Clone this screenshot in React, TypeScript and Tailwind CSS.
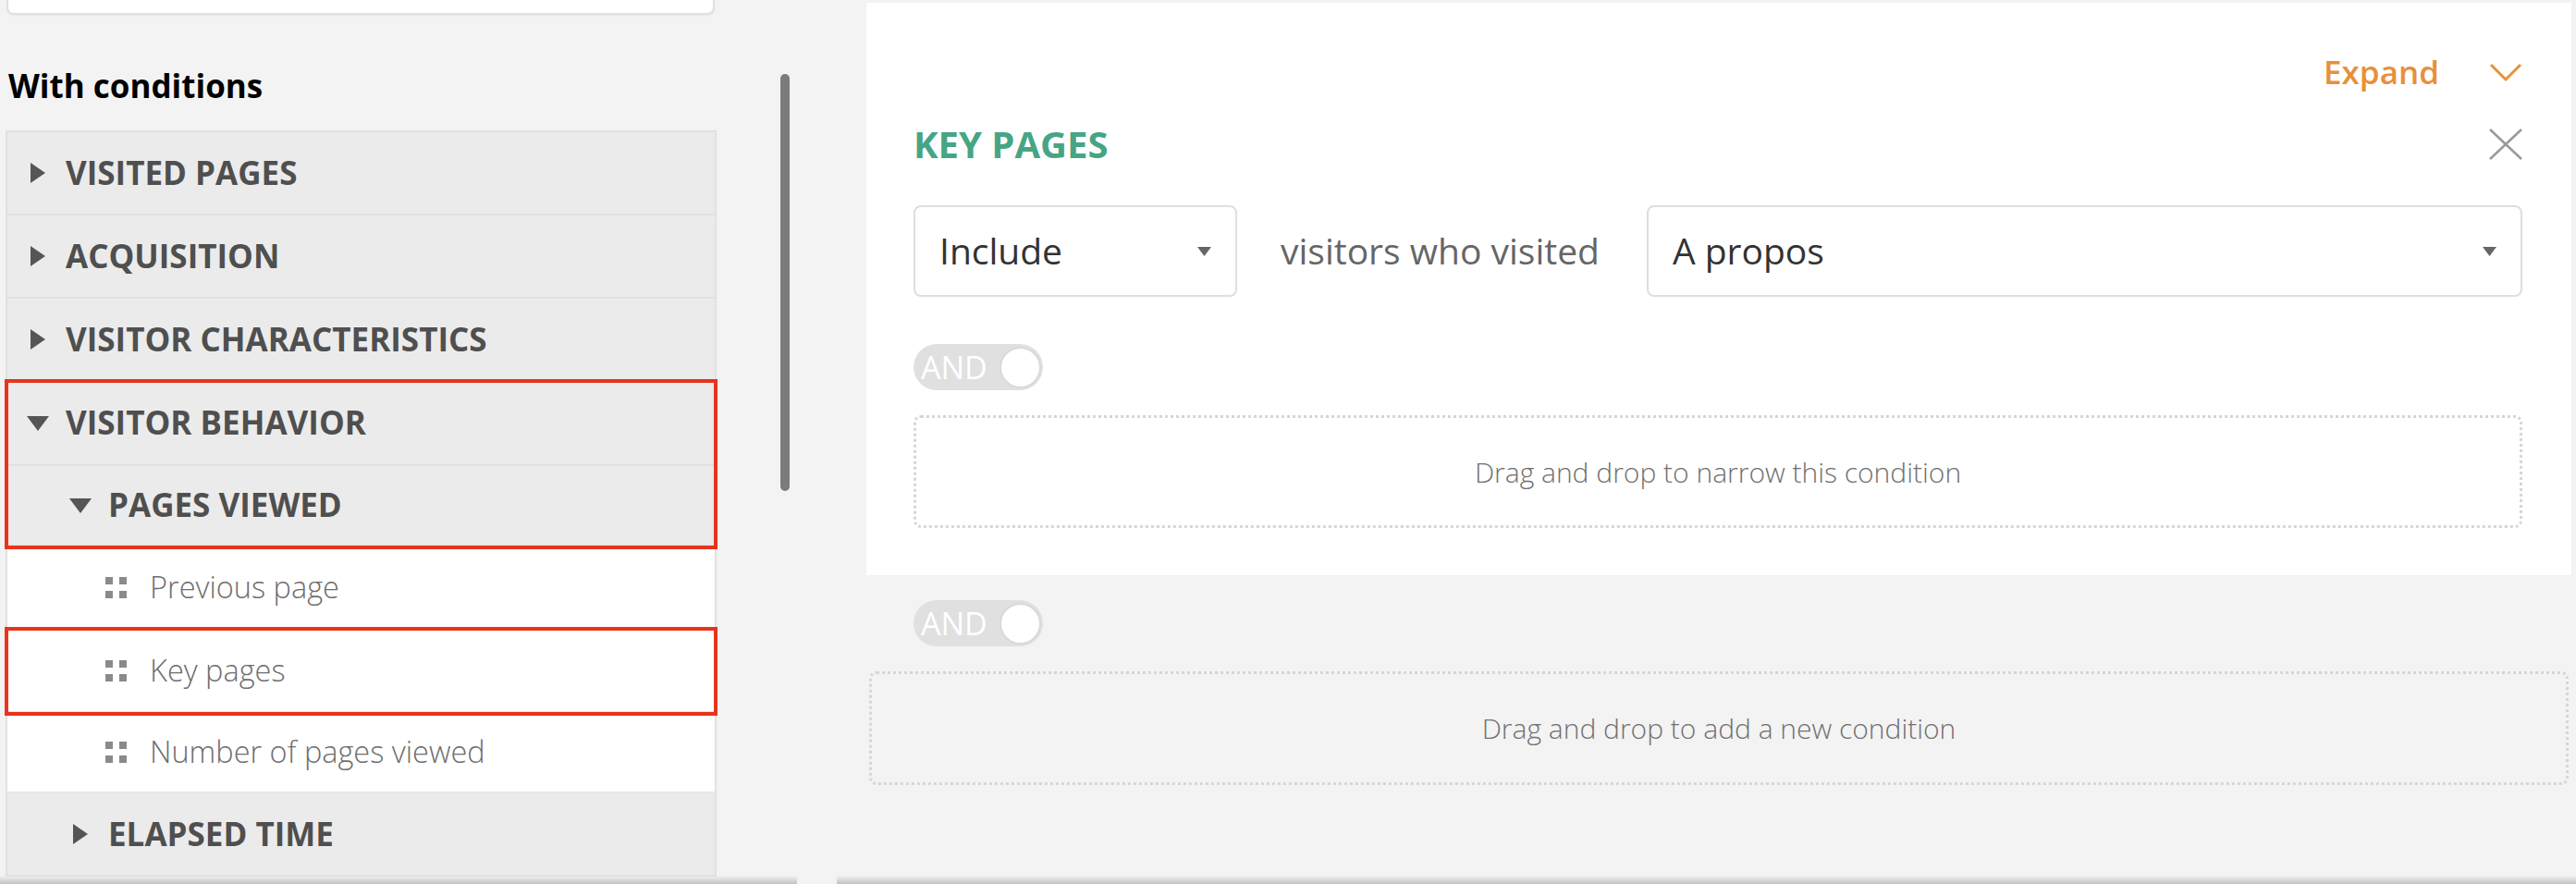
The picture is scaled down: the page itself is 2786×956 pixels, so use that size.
import React from "react";

const RightTri = () => (
  <svg width="18" height="22" viewBox="0 0 18 22" className="shrink-0">
    <polygon points="1,0 17,11 1,22" fill="#555555" />
  </svg>
);
const DownTri = () => (
  <svg width="24" height="18" viewBox="0 0 24 18" className="shrink-0">
    <polygon points="0,1 24,1 12,17" fill="#555555" />
  </svg>
);
const Grip = () => (
  <svg width="23" height="23" viewBox="0 0 23 23" className="shrink-0">
    <rect x="0" y="0" width="8" height="8" fill="#8a8a8a" />
    <rect x="15" y="0" width="8" height="8" fill="#8a8a8a" />
    <rect x="0" y="15" width="8" height="8" fill="#8a8a8a" />
    <rect x="15" y="15" width="8" height="8" fill="#8a8a8a" />
  </svg>
);
const SelTri = () => (
  <svg width="15" height="10" viewBox="0 0 15 10" className="shrink-0">
    <polygon points="0,0 15,0 7.5,10" fill="#666666" />
  </svg>
);

function Cat({ label, open, sub, h }: { label: string; open?: boolean; sub?: boolean; h: string }) {
  return (
    <div className={`flex items-center bg-[#ebebeb] border-b-2 border-[#e1e1e1] ${h} ${sub ? "pl-[67px]" : "pl-[21px]"}`}>
      <div className="w-[24px] flex justify-center">{open ? <DownTri /> : <RightTri />}</div>
      <span className="ml-[18px] text-[35px] font-bold text-[#4f4f4f]">{label}</span>
    </div>
  );
}

function Leaf({ label, h }: { label: string; h: string }) {
  return (
    <div className={`flex items-center bg-white border-b-2 border-[#e8e8e8] ${h} pl-[106px]`}>
      <Grip />
      <span className="ml-[25px] text-[32.5px] font-light text-[#6e6e6e]">{label}</span>
    </div>
  );
}

function Toggle() {
  return (
    <div className="w-[140px] h-[50px] rounded-full bg-[#e0e0e0] flex items-center justify-between pl-[8px] pr-[2px]">
      <span className="text-[34px] leading-none text-white">AND</span>
      <div className="w-[45px] h-[45px] rounded-full bg-white border-2 border-[#d9d9d9]" />
    </div>
  );
}

export default function App() {
  return (
    <div className="relative w-[2786px] h-[956px] overflow-hidden bg-[#f3f3f3] flex font-['Open_Sans',sans-serif]">
      {/* Left column */}
      <div className="w-[937px] shrink-0 flex">
        <div className="ml-[6px] w-[769px] flex flex-col">
          <div className="ml-[1px] w-[766px] h-[16px] bg-white border-2 border-t-0 border-[#e0e0e0] rounded-b-[8px] shadow-[0_1px_2px_rgba(0,0,0,0.06)]" />
          <div className="mt-[53px] pl-[3px] h-[48px] leading-[48px] text-[35px] font-bold text-black">With conditions</div>
          <div className="mt-[24px] border-x-2 border-t-2 border-[#e1e1e1] flex flex-col">
            <Cat label="VISITED PAGES" h="h-[90px]" />
            <Cat label="ACQUISITION" h="h-[90px]" />
            <Cat label="VISITOR CHARACTERISTICS" h="h-[90px]" />
            <div className="relative z-10 outline-4 outline-[#e8341c] outline-offset-[-1px] flex flex-col">
              <Cat label="VISITOR BEHAVIOR" open h="h-[91px]" />
              <Cat label="PAGES VIEWED" open sub h="h-[87px]" />
            </div>
            <Leaf label="Previous page" h="h-[90px]" />
            <div className="relative z-10 outline-4 outline-[#e8341c] outline-offset-[-1px]">
              <Leaf label="Key pages" h="h-[90px]" />
            </div>
            <Leaf label="Number of pages viewed" h="h-[87px]" />
            <Cat label="ELAPSED TIME" sub h="h-[90px]" />
          </div>
        </div>
        <div className="ml-[69px] mt-[80px] w-[10px] h-[451px] rounded-full bg-[#7b7b7b]" />
      </div>

      {/* Right column */}
      <div className="flex-1 pt-[3px] pr-[5px] flex flex-col">
        <div className="bg-white pt-[55px] pb-[51px] pl-[51px] pr-[53px] flex flex-col">
          <div className="h-[40px] flex items-center justify-end">
            <span className="text-[35px] leading-[40px] font-semibold text-[#e8903a]">Expand</span>
            <svg width="36" height="22" viewBox="0 0 36 22" className="ml-[54px]">
              <polyline points="2,3 18,19 34,3" fill="none" stroke="#e8903a" strokeWidth="3" />
            </svg>
          </div>
          <div className="mt-[31px] h-[54px] flex items-center justify-between">
            <span className="text-[40px] leading-[54px] font-bold text-[#46a585]">KEY PAGES</span>
            <svg width="36" height="34" viewBox="0 0 36 34">
              <line x1="1" y1="1" x2="35" y2="33" stroke="#9a9a9a" strokeWidth="2.5" />
              <line x1="35" y1="1" x2="1" y2="33" stroke="#9a9a9a" strokeWidth="2.5" />
            </svg>
          </div>
          <div className="mt-[39px] flex items-center">
            <div className="w-[350px] h-[99px] rounded-[8px] border-2 border-[#dedede] flex items-center justify-between pl-[26px] pr-[26px]">
              <span className="text-[39px] text-[#333333]">Include</span>
              <SelTri />
            </div>
            <span className="ml-[47px] mr-[51px] text-[39px] text-[#666666]">visitors who visited</span>
            <div className="flex-1 h-[99px] rounded-[8px] border-2 border-[#dedede] flex items-center justify-between pl-[26px] pr-[26px]">
              <span className="text-[39px] text-[#333333]">A propos</span>
              <SelTri />
            </div>
          </div>
          <div className="mt-[51px]">
            <Toggle />
          </div>
          <div className="mt-[27px] h-[122px] rounded-[8px] border-[3px] border-dotted border-[#d6d6d6] flex items-center justify-center">
            <span className="text-[30px] font-light text-[#707070]">Drag and drop to narrow this condition</span>
          </div>
        </div>
        <div className="mt-[27px] ml-[51px]">
          <Toggle />
        </div>
        <div className="mt-[27px] mx-[3px] h-[123px] rounded-[8px] border-[3px] border-dotted border-[#d6d6d6] flex items-center justify-center">
          <span className="text-[30px] font-light text-[#707070]">Drag and drop to add a new condition</span>
        </div>
      </div>

      {/* bottom shadow */}
      <div className="absolute bottom-0 left-0 w-[862px] h-[9px] bg-gradient-to-b from-[#f3f3f300] to-[#c2c2c2]" />
      <div className="absolute bottom-0 left-[905px] right-0 h-[9px] bg-gradient-to-b from-[#f3f3f300] to-[#c2c2c2]" />
    </div>
  );
}
